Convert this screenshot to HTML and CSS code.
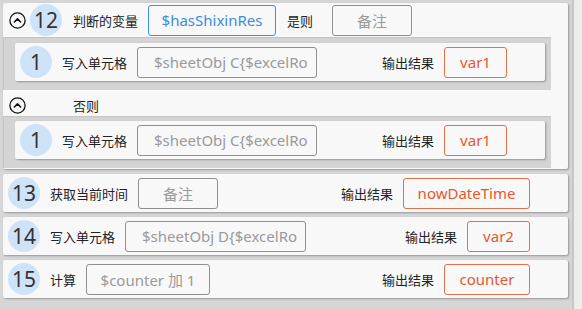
FILE: index.html
```html
<!DOCTYPE html>
<html>
<head>
  <title>流程步骤</title>
  <link rel="stylesheet" href="styles.css">
</head>
<body>
  <div class="page">
    <div class="list">

      <div class="card block">
        <div class="row head">
          <span class="toggle">
            <svg width="17" height="17" viewBox="0 0 17 17"><circle cx="8.5" cy="8.5" r="7.6" fill="none" stroke="#111" stroke-width="1.3"/><path d="M5.4 10 L8.5 6.9 L11.6 10" fill="none" stroke="#111" stroke-width="1.6" stroke-linecap="round" stroke-linejoin="round"/></svg>
          </span>
          <span class="badge">12</span>
          <span class="label">判断的变量</span>
          <span class="field blue w-128">$hasShixinRes</span>
          <span class="label then">是则</span>
          <span class="field w-80">备注</span>
        </div>
        <div class="nest">
          <div class="card inner">
            <span class="badge">1</span>
            <span class="label">写入单元格</span>
            <span class="field w-180">$sheetObj C{$excelRo</span>
            <span class="spacer"></span>
            <span class="label">输出结果</span>
            <span class="field out w-63">var1</span>
          </div>
        </div>
        <div class="row else">
          <span class="toggle">
            <svg width="17" height="17" viewBox="0 0 17 17"><circle cx="8.5" cy="8.5" r="7.6" fill="none" stroke="#111" stroke-width="1.3"/><path d="M5.4 10 L8.5 6.9 L11.6 10" fill="none" stroke="#111" stroke-width="1.6" stroke-linecap="round" stroke-linejoin="round"/></svg>
          </span>
          <span class="label else-label">否则</span>
        </div>
        <div class="nest">
          <div class="card inner">
            <span class="badge">1</span>
            <span class="label">写入单元格</span>
            <span class="field w-180">$sheetObj C{$excelRo</span>
            <span class="spacer"></span>
            <span class="label">输出结果</span>
            <span class="field out w-63">var1</span>
          </div>
        </div>
      </div>

      <div class="card step">
        <span class="badge">13</span>
        <span class="label">获取当前时间</span>
        <span class="field w-80">备注</span>
        <span class="spacer"></span>
        <span class="label">输出结果</span>
        <span class="field out w-127">nowDateTime</span>
      </div>

      <div class="card step">
        <span class="badge">14</span>
        <span class="label">写入单元格</span>
        <span class="field w-181">$sheetObj D{$excelRo</span>
        <span class="spacer"></span>
        <span class="label">输出结果</span>
        <span class="field out w-63">var2</span>
      </div>

      <div class="card step">
        <span class="badge">15</span>
        <span class="label">计算</span>
        <span class="field w-124">$counter 加 1</span>
        <span class="spacer"></span>
        <span class="label">输出结果</span>
        <span class="field out w-86">counter</span>
      </div>

    </div>
    <div class="scrollbar"></div>
  </div>
</body>
</html>
```

FILE: styles.css
```css
body {
  margin: 0;
  background-color: #d6d6d6;
  font-family: "Noto Sans", "Noto Sans CJK SC", sans-serif;
  color: #222;
  height: 309px;
  overflow: hidden;
}
.page {
  display: flex;
  height: 309px;
}
.list {
  width: 565px;
  padding: 3px 4px 0 3px;
  display: flex;
  flex-direction: column;
  gap: 5px;
}
.scrollbar {
  width: 8px;
  background-color: #ededed;
  border-left: 2px solid #c6c6c6;
}
.card {
  background-color: #f8f8f9;
  box-shadow: 1px 1px 2px rgba(0, 0, 0, 0.3);
  border-radius: 2px;
}
.step, .inner {
  display: flex;
  align-items: center;
  height: 38px;
  padding: 0 38px 0 5px;
  gap: 10px;
}
.block {
  display: flex;
  flex-direction: column;
  height: 166px;
}
.row {
  display: flex;
  align-items: center;
  padding-left: 6px;
}
.head {
  height: 34px;
}
.else {
  height: 22px;
  padding-top: 4px;
}
.toggle {
  display: flex;
  width: 17px;
  height: 17px;
  margin-right: 4px;
}
.head .label {
  margin-left: 11px;
}
.head .field {
  margin-left: 10px;
}
.head .then {
  margin-left: 11px;
}
.head .w-80 {
  margin-left: 19px;
}
.else-label {
  margin-left: 43px;
}
.nest {
  background-color: #d4d4d4;
  margin-right: 17px;
  padding: 6px 6px 9px 12px;
  box-shadow: inset 1px 1px 1px rgba(0, 0, 0, 0.08);
}
.nest + .else + .nest {
  padding-top: 5px;
}
.badge {
  width: 32px;
  height: 32px;
  border-radius: 50%;
  background-color: #cfe3f8;
  display: flex;
  align-items: center;
  justify-content: center;
  font-size: 21px;
  color: #333;
  flex-shrink: 0;
}
.label {
  font-family: "Noto Sans CJK SC", sans-serif;
  font-size: 13px;
  white-space: nowrap;
}
.spacer {
  flex: 1;
}
.field {
  height: 29px;
  border: 1px solid #8f8f8f;
  border-radius: 3px;
  display: flex;
  align-items: center;
  justify-content: center;
  font-size: 15px;
  color: #9a9a9a;
  white-space: nowrap;
  overflow: hidden;
  box-sizing: content-box;
  flex-shrink: 0;
}
.w-180, .w-181 {
  justify-content: flex-start;
  padding-left: 16px;
}
.blue {
  border-color: #3d8fe0;
  color: #3a8dde;
}
.out {
  border-color: #e2714a;
  color: #e4582e;
}
.w-63 { width: 61px; }
.w-80 { width: 78px; }
.w-86 { width: 84px; }
.w-124 { width: 122px; }
.w-127 { width: 125px; }
.w-128 { width: 126px; }
.w-180 { width: 162px; }
.w-181 { width: 163px; }
```
